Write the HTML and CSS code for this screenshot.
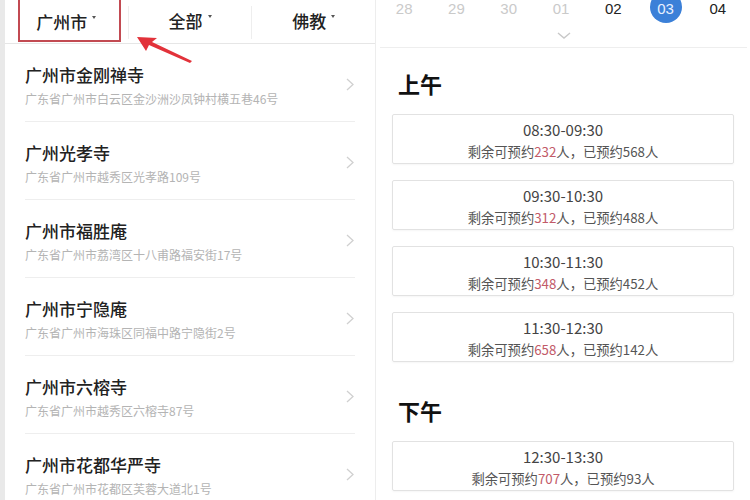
FILE: index.html
```html
<!DOCTYPE html>
<html lang="zh-CN">
<head>
<meta charset="utf-8">
<title>预约</title>
<link rel="stylesheet" href="styles.css">
</head>
<body>
<div class="page">
  <section class="left">
    <div class="tabs">
      <div class="tab">广州市<span class="caret"></span></div>
      <div class="tab sep">全部<span class="caret"></span></div>
      <div class="tab sep">佛教<span class="caret"></span></div>
      <div class="mark"></div>
      <svg class="arrow" width="80" height="40" viewBox="0 0 80 40">
        <polygon points="0,3 20,4 15,8 55,27 53,29 12,11 9,17" fill="#e2323a"/>
      </svg>
    </div>
    <ul class="list">
      <li class="item"><div class="info"><div class="name">广州市金刚禅寺</div><div class="addr">广东省广州市白云区金沙洲沙凤钟村横五巷46号</div></div><svg class="chev" width="8" height="13" viewBox="0 0 8 13"><path d="M1 1l6 5.5L1 12" fill="none" stroke="#d0d0d0" stroke-width="1.3"/></svg></li>
      <li class="item"><div class="info"><div class="name">广州光孝寺</div><div class="addr">广东省广州市越秀区光孝路109号</div></div><svg class="chev" width="8" height="13" viewBox="0 0 8 13"><path d="M1 1l6 5.5L1 12" fill="none" stroke="#d0d0d0" stroke-width="1.3"/></svg></li>
      <li class="item"><div class="info"><div class="name">广州市福胜庵</div><div class="addr">广东省广州市荔湾区十八甫路福安街17号</div></div><svg class="chev" width="8" height="13" viewBox="0 0 8 13"><path d="M1 1l6 5.5L1 12" fill="none" stroke="#d0d0d0" stroke-width="1.3"/></svg></li>
      <li class="item"><div class="info"><div class="name">广州市宁隐庵</div><div class="addr">广东省广州市海珠区同福中路宁隐街2号</div></div><svg class="chev" width="8" height="13" viewBox="0 0 8 13"><path d="M1 1l6 5.5L1 12" fill="none" stroke="#d0d0d0" stroke-width="1.3"/></svg></li>
      <li class="item"><div class="info"><div class="name">广州市六榕寺</div><div class="addr">广东省广州市越秀区六榕寺87号</div></div><svg class="chev" width="8" height="13" viewBox="0 0 8 13"><path d="M1 1l6 5.5L1 12" fill="none" stroke="#d0d0d0" stroke-width="1.3"/></svg></li>
      <li class="item"><div class="info"><div class="name">广州市花都华严寺</div><div class="addr">广东省广州市花都区芙蓉大道北1号</div></div><svg class="chev" width="8" height="13" viewBox="0 0 8 13"><path d="M1 1l6 5.5L1 12" fill="none" stroke="#d0d0d0" stroke-width="1.3"/></svg></li>
    </ul>
  </section>
  <section class="right">
    <div class="dates">
      <div class="d past">28</div>
      <div class="d past">29</div>
      <div class="d past">30</div>
      <div class="d past">01</div>
      <div class="d">02</div>
      <div class="d on">03</div>
      <div class="d">04</div>
    </div>
    <div class="more"><svg width="14" height="8" viewBox="0 0 14 8"><path d="M1 1l6 5 6-5" fill="none" stroke="#c8c8c8" stroke-width="1.4"/></svg></div>
    <div class="period first">
      <h2 class="ptitle">上午</h2>
      <div class="slot"><div class="time">08:30-09:30</div><div class="cnt">剩余可预约<em>232</em>人，已预约568人</div></div>
      <div class="slot"><div class="time">09:30-10:30</div><div class="cnt">剩余可预约<em>312</em>人，已预约488人</div></div>
      <div class="slot"><div class="time">10:30-11:30</div><div class="cnt">剩余可预约<em>348</em>人，已预约452人</div></div>
      <div class="slot"><div class="time">11:30-12:30</div><div class="cnt">剩余可预约<em>658</em>人，已预约142人</div></div>
    </div>
    <div class="period">
      <h2 class="ptitle">下午</h2>
      <div class="slot"><div class="time">12:30-13:30</div><div class="cnt">剩余可预约<em>707</em>人，已预约93人</div></div>
    </div>
  </section>
</div>
</body>
</html>
```
FILE: styles.css
```css
* { box-sizing: border-box; }
html, body { margin: 0; padding: 0; background: #fff; }
body {
  font-family: "Noto Sans CJK SC", "Noto Sans", sans-serif;
  color: #222;
  width: 750px;
  height: 500px;
  overflow: hidden;
}
.page { display: flex; height: 500px; }
.left {
  width: 376px;
  flex: none;
  border-left: 5px solid #e9e9e9;
  border-right: 1px solid #ededed;
}
.tabs {
  position: relative;
  display: flex;
  height: 44px;
  border-bottom: 1px solid #e6e6e6;
}
.tab {
  flex: 1;
  display: flex;
  align-items: center;
  justify-content: center;
  font-size: 17px;
  color: #222;
  font-weight: 500;
}
.tab.sep { border-left: 1px solid #eeeeee; margin: 6px 0 4px; padding-bottom: 4px; }
.caret {
  display: inline-block;
  width: 0; height: 0;
  border-left: 2.5px solid transparent;
  border-right: 2.5px solid transparent;
  border-top: 3px solid #555;
  margin-left: 5px;
  margin-top: -9px;
}
.mark {
  position: absolute;
  left: 13px; top: -3px;
  width: 103px; height: 45px;
  border: 2px solid #c24a52;
}
.arrow { position: absolute; left: 132px; top: 34px; }
.list { list-style: none; margin: 0; padding: 0; }
.item {
  display: flex;
  align-items: center;
  height: 78px;
  margin: 0 20px;
  padding: 19px 0 0;
  border-bottom: 1px solid #eeeeee;
}
.info { flex: 1; align-self: flex-start; }
.name { font-size: 17px; line-height: 24px; font-weight: 500; color: #222; }
.addr { font-size: 12px; line-height: 16px; margin-top: 4px; color: #b4b4b4; }
.chev { margin-right: 1px; margin-top: -16px; }
.right { flex: 1; padding: 0 6px 0 2px; }
.dates {
  display: grid;
  grid-template-columns: repeat(7, 1fr);
  height: 22px;
  align-items: start;
}
.d {
  text-align: center;
  font-family: "Liberation Sans", Arial, sans-serif;
  font-size: 15px;
  line-height: normal;
  color: #222;
}
.d.past { color: #cacaca; }
.d.on {
  position: relative;
  z-index: 0;
  color: #e8f0ff;
}
.d.on::before {
  content: "";
  position: absolute;
  z-index: -1;
  width: 32px;
  height: 32px;
  left: 50%;
  top: 7px;
  margin: -16px 0 0 -16px;
  border-radius: 50%;
  background: #3b80d8;
}
.more {
  height: 26px;
  display: flex;
  align-items: center;
  justify-content: center;
  border-bottom: 1px solid #eeeeee;
  margin: 0 -3px 0 2px;
  padding-top: 3px;
}
.period { padding: 17px 10px 0 14px; }
.period.first { padding-top: 20px; }
.ptitle {
  margin: 0 0 16px 6px;
  font-size: 22px;
  line-height: 30px;
  font-weight: 700;
  color: #111;
}
.slot {
  height: 50px;
  border: 1px solid #e2e2e2;
  border-radius: 2px;
  box-shadow: 0 1px 2px rgba(0,0,0,0.04);
  margin-bottom: 16px;
  text-align: center;
  padding-top: 5px;
}
.time { font-size: 15px; line-height: 20px; color: #444; }
.cnt { font-size: 13.3px; line-height: 18px; margin-top: 3px; color: #555; }
.cnt em { font-style: normal; color: #c25a68; }
```
